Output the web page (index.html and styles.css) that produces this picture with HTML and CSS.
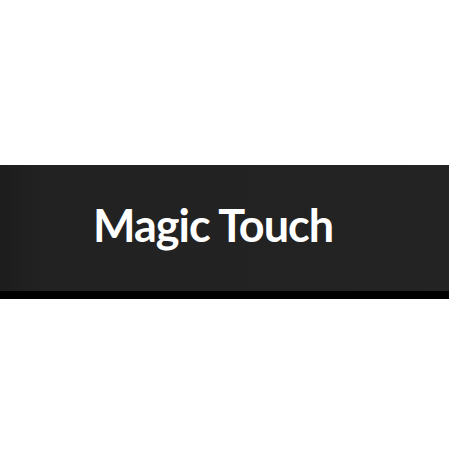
FILE: index.html
```html
<!DOCTYPE html>
<html>
<head>
<meta charset="utf-8">
<link rel="stylesheet" href="styles.css">
</head>
<body>
<div class="page">
  <header class="banner">
    <h1 class="title">Magic Touch</h1>
  </header>
</div>
</body>
</html>
```
FILE: styles.css
```css
html, body {
  margin: 0;
  padding: 0;
  background: #ffffff;
}
.page {
  width: 449px;
  height: 449px;
  display: flex;
  flex-direction: column;
  padding-top: 165px;
  box-sizing: border-box;
}
.banner {
  height: 126px;
  border-bottom: 8px solid #000000;
  background: linear-gradient(to right, #1d1d1d 0px, #222222 45px, #232323 100%);
  display: flex;
  align-items: center;
  padding-left: 93px;
}
.title {
  margin: 0;
  font-family: Lato, "Liberation Sans", sans-serif;
  font-weight: 700;
  font-size: 45px;
  letter-spacing: -1px;
  line-height: 1;
  color: #ffffff;
  position: relative;
  top: -3px;
}
```
